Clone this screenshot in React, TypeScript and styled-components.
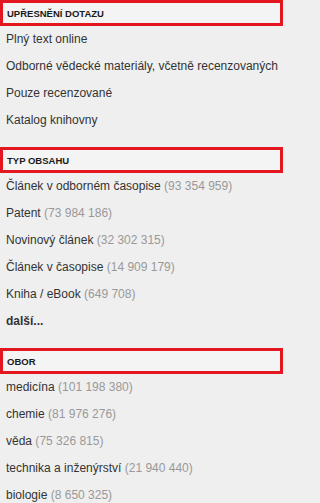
import styled, { createGlobalStyle } from 'styled-components'

const GlobalStyle = createGlobalStyle`
  body {
    margin: 0;
    background: #efefef;
    font-family: 'Liberation Sans', Arial, sans-serif;
  }
`

const Sidebar = styled.aside`
  width: 285px;
  display: flex;
  flex-direction: column;
`

const Section = styled.section`
  display: flex;
  flex-direction: column;
  & + & {
    margin-top: 13px;
  }
`

const Heading = styled.h3`
  margin: 0;
  width: 283px;
  box-sizing: border-box;
  height: 26px;
  border: 3px solid #e3171f;
  background: #f4f4f4;
  padding-left: 4px;
  display: flex;
  align-items: center;
  font-size: 9.5px;
  font-weight: bold;
  text-transform: uppercase;
  color: #1a1a1a;
`

const List = styled.ul`
  list-style: none;
  margin: 0;
  padding: 0;
`

const Item = styled.li<{ $bold?: boolean }>`
  height: 27px;
  line-height: 27px;
  padding-left: 6px;
  font-size: 12px;
  color: #333;
  font-weight: ${(p) => (p.$bold ? 'bold' : 'normal')};
  white-space: nowrap;
`

const Count = styled.span`
  color: #999;
`

interface Facet {
  label: string
  count?: string
}

const refine: Facet[] = [
  { label: 'Plný text online' },
  { label: 'Odborné vědecké materiály, včetně recenzovaných' },
  { label: 'Pouze recenzované' },
  { label: 'Katalog knihovny' },
]

const types: Facet[] = [
  { label: 'Článek v odborném časopise', count: '93 354 959' },
  { label: 'Patent', count: '73 984 186' },
  { label: 'Novinový článek', count: '32 302 315' },
  { label: 'Článek v časopise', count: '14 909 179' },
  { label: 'Kniha / eBook', count: '649 708' },
]

const fields: Facet[] = [
  { label: 'medicína', count: '101 198 380' },
  { label: 'chemie', count: '81 976 276' },
  { label: 'věda', count: '75 326 815' },
  { label: 'technika a inženýrství', count: '21 940 440' },
  { label: 'biologie', count: '8 650 325' },
]

function FacetItem({ label, count }: Facet) {
  return (
    <Item>
      {label}
      {count && <Count> ({count})</Count>}
    </Item>
  )
}

function App() {
  return (
    <>
      <GlobalStyle />
      <Sidebar>
        <Section>
          <Heading>Upřesnění dotazu</Heading>
          <List>
            {refine.map((f) => (
              <FacetItem key={f.label} {...f} />
            ))}
          </List>
        </Section>
        <Section>
          <Heading>Typ obsahu</Heading>
          <List>
            {types.map((f) => (
              <FacetItem key={f.label} {...f} />
            ))}
            <Item $bold>další...</Item>
          </List>
        </Section>
        <Section>
          <Heading>Obor</Heading>
          <List>
            {fields.map((f) => (
              <FacetItem key={f.label} {...f} />
            ))}
          </List>
        </Section>
      </Sidebar>
    </>
  )
}

export default App
